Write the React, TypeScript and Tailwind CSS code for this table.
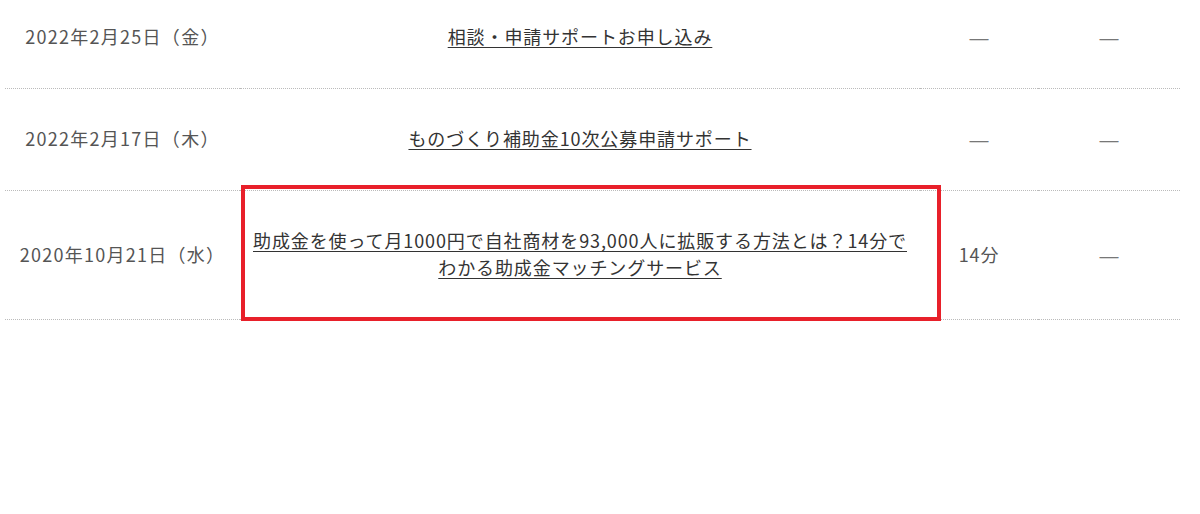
import React from 'react';

type Row = { date: string; title: string; time: string; extra: string };

const DASH = '—';

const rows: Row[] = [
  { date: '2022年2月25日（金）', title: '相談・申請サポートお申し込み', time: DASH, extra: DASH },
  { date: '2022年2月17日（木）', title: 'ものづくり補助金10次公募申請サポート', time: DASH, extra: DASH },
  {
    date: '2020年10月21日（水）',
    title: '助成金を使って月1000円で自社商材を93,000人に拡販する方法とは？14分でわかる助成金マッチングサービス',
    time: '14分',
    extra: DASH,
  },
];

const cell = 'border-b border-dotted border-[#bbbbbb] pt-[36px] pb-[38px] text-center align-middle';

function Value({ v }: { v: string }) {
  if (v === DASH) {
    return (
      <span className="font-['Liberation_Sans'] text-[19px] leading-[0px] tracking-normal text-[#777]">{DASH}</span>
    );
  }
  return <span>{v}</span>;
}

export default function App() {
  return (
    <div
      className="relative h-[514px] w-[1200px] overflow-hidden bg-white text-[18px] leading-[27px] tracking-[0.05em] text-[#555]"
      style={{ fontFamily: '"Noto Sans CJK JP", "Noto Sans", sans-serif' }}
    >
      <table className="ml-[5px] mt-[-13px] w-[1175px] table-fixed border-collapse">
        <colgroup>
          <col className="w-[235px]" />
          <col className="w-[680px]" />
          <col className="w-[118px]" />
          <col className="w-[142px]" />
        </colgroup>
        <tbody>
          {rows.map((r) => (
            <tr key={r.date}>
              <td className={`${cell} tracking-[0.07em]`}>{r.date}</td>
              <td className={`${cell} px-1`}>
                <a className="text-[#333] underline decoration-1 underline-offset-[3px]">{r.title}</a>
              </td>
              <td className={cell}>
                <Value v={r.time} />
              </td>
              <td className={cell}>
                <Value v={r.extra} />
              </td>
            </tr>
          ))}
        </tbody>
      </table>
      <div className="pointer-events-none absolute left-[241px] top-[185px] h-[136px] w-[700px] border-[4px] border-[#e8202a]" />
    </div>
  );
}
